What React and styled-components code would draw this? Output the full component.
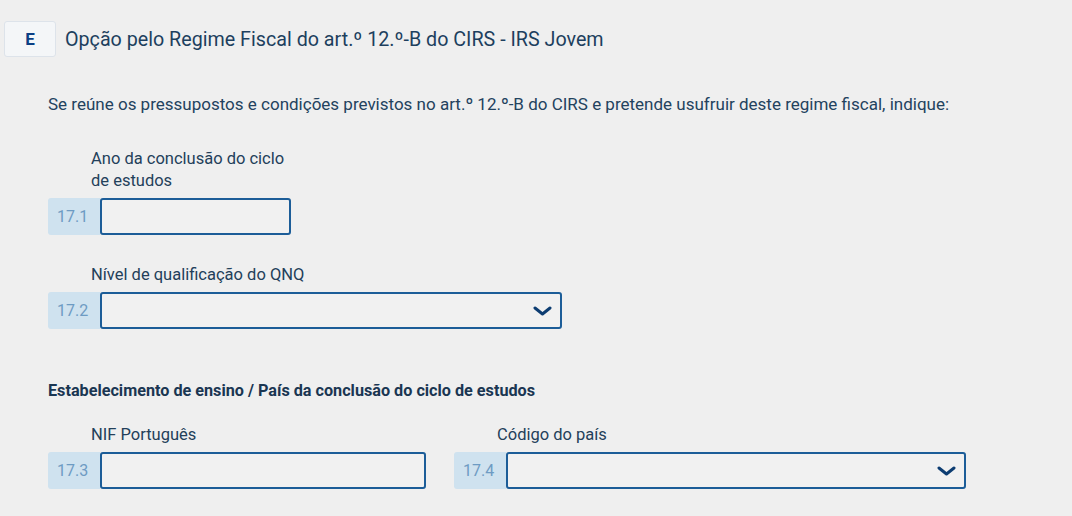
import React from "react";
import styled, { createGlobalStyle } from "styled-components";

const GlobalStyle = createGlobalStyle`
  body {
    margin: 0;
    background-color: #efefef;
    font-family: Roboto, "Liberation Sans", sans-serif;
  }
`;

const Page = styled.div`
  width: 1072px;
  height: 516px;
  overflow: hidden;
  box-sizing: border-box;
  padding: 21px 0 0 4px;
  background-color: #efefef;
  color: #22405c;
`;

const SectionHeader = styled.div`
  display: flex;
  align-items: center;
  gap: 9px;
`;

const SectionLetter = styled.div`
  width: 52px;
  height: 36px;
  box-sizing: border-box;
  display: flex;
  align-items: center;
  justify-content: center;
  background-color: #f4f6f8;
  border: 1px solid #dde3ea;
  border-radius: 3px;
  color: #0b3f84;
  font-weight: 700;
  font-size: 17px;
`;

const SectionTitle = styled.h2`
  margin: 0;
  font-size: 19.7px;
  font-weight: 400;
  color: #1d3f5e;
`;

const Body = styled.div`
  padding: 0 0 0 44px;
`;

const Intro = styled.p`
  margin: 36px 0 0;
  font-size: 17px;
  line-height: 22px;
  color: #23425e;
`;

const SubHeading = styled.h3`
  margin: ${(p) => p.$top}px 0 0;
  font-size: 16.2px;
  line-height: 22px;
  font-weight: 700;
  color: #1a3652;
`;

const Row = styled.div`
  display: flex;
  gap: 28px;
  margin-top: ${(p) => p.$top}px;
`;

const FieldGroup = styled.div`
  display: flex;
  flex-direction: column;
`;

const Label = styled.label`
  padding-left: 43px;
  font-size: 16.5px;
  line-height: 22px;
  color: #23405a;
  margin-bottom: 6px;
`;

const FieldRow = styled.div`
  display: flex;
  align-items: stretch;
  height: 37px;
`;

const FieldNumber = styled.div`
  width: 52px;
  box-sizing: border-box;
  padding-left: 9px;
  display: flex;
  align-items: center;
  background-color: #cfe2ef;
  border-radius: 3px 0 0 3px;
  color: #6e9bc3;
  font-size: 16px;
`;

const TextInput = styled.input`
  width: ${(p) => p.$width}px;
  box-sizing: border-box;
  margin: 0;
  padding: 0 10px;
  background-color: #f1f1f1;
  border: 2px solid #1c5d98;
  border-radius: 3px;
  font-family: inherit;
  font-size: 16px;
  color: #22405c;

  &:focus {
    outline: none;
  }
`;

const SelectBox = styled.div`
  width: ${(p) => p.$width}px;
  box-sizing: border-box;
  display: flex;
  align-items: center;
  justify-content: flex-end;
  padding-right: 8px;
  background-color: #f1f1f1;
  border: 2px solid #1c5d98;
  border-radius: 3px;
  cursor: pointer;
`;

const Chevron = () => (
  <svg width="19" height="10" viewBox="0 0 19 10" fill="none">
    <path
      d="M2 2 L9.5 8 L17 2"
      stroke="#0d3d72"
      strokeWidth="3"
      strokeLinecap="round"
      strokeLinejoin="round"
    />
  </svg>
);

const Field = ({ label, number, width, select }) => (
  <FieldGroup>
    <Label>{label}</Label>
    <FieldRow>
      <FieldNumber>{number}</FieldNumber>
      {select ? (
        <SelectBox $width={width}>
          <Chevron />
        </SelectBox>
      ) : (
        <TextInput type="text" $width={width} />
      )}
    </FieldRow>
  </FieldGroup>
);

const App = () => {
  return (
    <>
      <GlobalStyle />
      <Page>
        <SectionHeader>
          <SectionLetter>E</SectionLetter>
          <SectionTitle>
            Opção pelo Regime Fiscal do art.º 12.º-B do CIRS - IRS Jovem
          </SectionTitle>
        </SectionHeader>
        <Body>
          <Intro>
            Se reúne os pressupostos e condições previstos no art.º 12.º-B do
            CIRS e pretende usufruir deste regime fiscal, indique:
          </Intro>
          <Row $top={33}>
            <Field
              label={
                <>
                  Ano da conclusão do ciclo
                  <br />
                  de estudos
                </>
              }
              number="17.1"
              width={191}
            />
          </Row>
          <Row $top={29}>
            <Field
              label="Nível de qualificação do QNQ"
              number="17.2"
              width={462}
              select
            />
          </Row>
          <SubHeading $top={51}>
            Estabelecimento de ensino / País da conclusão do ciclo de estudos
          </SubHeading>
          <Row $top={22}>
            <Field label="NIF Português" number="17.3" width={326} />
            <Field
              label="Código do país"
              number="17.4"
              width={460}
              select
            />
          </Row>
        </Body>
      </Page>
    </>
  );
};

export default App;
